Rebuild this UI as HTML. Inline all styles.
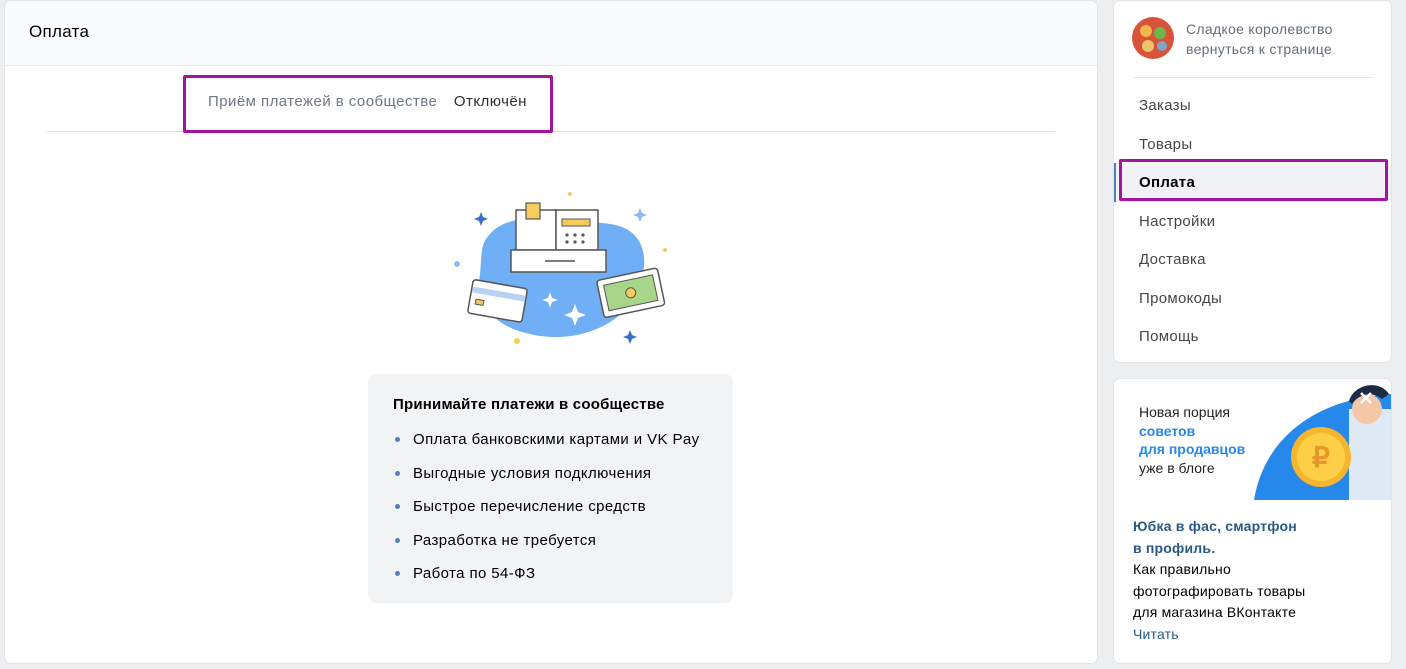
<!DOCTYPE html>
<html><head><meta charset="utf-8">
<style>
*{box-sizing:border-box;margin:0;padding:0}
body{width:1406px;height:669px;background:#edeef0;font-family:"Liberation Sans",Arial,sans-serif;position:relative;overflow:hidden;color:#000;letter-spacing:0.3px}
.card{position:absolute;background:#fff;border-radius:6px;box-shadow:0 0 0 1px #e3e4e8}
.main{left:5px;top:1px;width:1092px;height:662px}
.hdr{height:65px;background:#fafbfc;border-bottom:1px solid #e7e8ec;border-radius:6px 6px 0 0;padding:21px 0 0 24px;font-size:17px;color:#000}
.status{position:absolute;left:203px;top:92px;font-size:15px;color:#6d7885;letter-spacing:0.45px}
.status b{font-weight:normal;color:#2c2d2e;margin-left:12px}
.line{position:absolute;left:42px;top:130px;width:1008px;height:1px;background:#dce1e6}
.hl{position:absolute;border:3px solid #a4149f;border-radius:2px}
.info{position:absolute;left:363px;top:373px;width:365px;height:229px;background:#f2f3f5;border-radius:8px;padding:22px 0 0 25px}
.info h4{font-size:15px;font-weight:bold;color:#000;margin-bottom:18px;letter-spacing:0.2px}
.info li{list-style:none;font-size:15px;color:#000;height:33.5px;position:relative;padding-left:20px;letter-spacing:0.4px}
.info li:before{content:"";position:absolute;left:2px;top:6px;width:5px;height:5px;border-radius:50%;background:#5181b8}
.side{left:1114px;top:1px;width:277px;height:361px}
.grp{position:absolute;left:18px;top:16px;display:flex}
.grp .t{margin-left:12px;font-size:14px;color:#626d7a;line-height:20px;margin-top:2px}
.sep{position:absolute;left:19px;top:76px;width:240px;height:1px;background:#e7e8ec}
.menu{position:absolute;left:0;top:85px;width:277px}
.menu div{height:38.5px;padding:11px 0 0 25px;font-size:15px;color:#454647}
.menu .act{background:#f0f2f5;font-weight:bold;color:#000;border-left:2px solid #5181b8;padding-left:23px}
.promo{left:1114px;top:379px;width:277px;height:284px;overflow:hidden}
.pt{position:absolute;left:25px;top:24px;font-size:14px;line-height:18.5px;color:#222;letter-spacing:0}
.pt span{color:#2688eb;font-weight:bold}
.p2{position:absolute;left:19px;top:137px;font-size:14px;line-height:21.5px;color:#000;letter-spacing:0.2px}
.p2 b{color:#2a5885}
.p2 a{color:#2a5885}
</style></head><body>
<div class="card main">
<div class="hdr">Оплата</div>
<div class="status">Приём платежей в сообществе <b>Отключён</b></div>
<div class="line"></div>
<svg style="position:absolute;left:435px;top:178px" width="230" height="165" viewBox="430 170 230 165">
<path d="M480 225 C 500 200 560 210 600 215 C 640 220 640 260 625 285 C 610 320 560 335 520 325 C 485 318 465 295 470 265 C 472 245 470 235 480 225Z" fill="#70aef5"/>
<rect x="506" y="201" width="40" height="40" fill="#fff" stroke="#555" stroke-width="1.5"/>
<rect x="516" y="194" width="14" height="16" fill="#f3cc5c" stroke="#555" stroke-width="1.2"/>
<rect x="546" y="201" width="42" height="40" fill="#fff" stroke="#555" stroke-width="1.5"/>
<rect x="552" y="210" width="28" height="7" fill="#f3cc5c" stroke="#555"/>
<g fill="#555"><circle cx="557" cy="226" r="1.6"/><circle cx="565" cy="226" r="1.6"/><circle cx="573" cy="226" r="1.6"/><circle cx="557" cy="233" r="1.6"/><circle cx="565" cy="233" r="1.6"/><circle cx="573" cy="233" r="1.6"/></g>
<rect x="501" y="241" width="95" height="22" fill="#fff" stroke="#555" stroke-width="1.5"/>
<line x1="535" y1="252" x2="565" y2="252" stroke="#555" stroke-width="1.5"/>
<g transform="rotate(10 488 292)"><rect x="460" y="275" width="55" height="34" rx="3" fill="#fff" stroke="#555" stroke-width="1.5"/><rect x="461" y="282" width="53" height="6" fill="#b9d2f4"/><rect x="466" y="294" width="8" height="5" fill="#f3cc5c" stroke="#555"/></g>
<g transform="rotate(-12 620 285)"><rect x="590" y="265" width="62" height="38" rx="3" fill="#fff" stroke="#555" stroke-width="1.5"/><rect x="596" y="271" width="50" height="26" fill="#a7d68a" stroke="#555"/><circle cx="621" cy="284" r="5" fill="#f3cc5c" stroke="#555"/></g>
<path d="M540 283 l2 6 6 2 -6 2 -2 6 -2 -6 -6 -2 6 -2z" fill="#fff"/>
<path d="M565 295 l3 8 8 3 -8 3 -3 8 -3 -8 -8 -3 8 -3z" fill="#fff"/>
<path d="M471 203 l2 5 5 2 -5 2 -2 5 -2 -5 -5 -2 5 -2z" fill="#3a6fc1"/>
<path d="M630 199 l2 5 5 2 -5 2 -2 5 -2 -5 -5 -2 5 -2z" fill="#8fbaef"/>
<path d="M620 321 l2 5 5 2 -5 2 -2 5 -2 -5 -5 -2 5 -2z" fill="#3a6fc1"/>
<circle cx="560" cy="185" r="2" fill="#f3cc5c"/><circle cx="655" cy="241" r="2" fill="#f3cc5c"/><circle cx="507" cy="332" r="3" fill="#f3cc5c"/><circle cx="447" cy="255" r="3" fill="#8fbaef"/>
</svg>
<div class="info"><h4>Принимайте платежи в сообществе</h4><ul>
<li>Оплата банковскими картами и VK Pay</li><li>Выгодные условия подключения</li><li>Быстрое перечисление средств</li><li>Разработка не требуется</li><li>Работа по 54-ФЗ</li></ul></div>
</div>
<div class="hl" style="left:183px;top:75px;width:370px;height:58px"></div>
<div class="card side">
<div class="grp"><svg width="42" height="42"><circle cx="21" cy="21" r="21" fill="#d9523a"/><circle cx="14" cy="14" r="6" fill="#f0b64a"/><circle cx="28" cy="16" r="6" fill="#6cb84a"/><circle cx="16" cy="29" r="6" fill="#e9c46a"/><circle cx="30" cy="29" r="5" fill="#7aa6c8"/></svg>
<div class="t">Сладкое королевство<br>вернуться к странице</div></div>
<div class="sep"></div>
<div class="menu"><div>Заказы</div><div>Товары</div><div class="act">Оплата</div><div>Настройки</div><div>Доставка</div><div>Промокоды</div><div>Помощь</div></div>
</div>
<div class="hl" style="left:1119px;top:159px;width:269px;height:42px"></div>
<div class="card promo">
<svg style="position:absolute;left:140px;top:0" width="137" height="121"><path d="M0 121 C 10 60 60 20 137 15 L137 121Z" fill="#2688eb"/><rect x="95" y="30" width="42" height="91" fill="#dfe9f5"/><circle cx="113" cy="30" r="15" fill="#f5c7a6"/><path d="M95 22 C 100 5 125 0 135 15 L128 20 C 118 12 105 15 98 25Z" fill="#1d2a44"/><circle cx="67" cy="78" r="30" fill="#f5b52e"/><circle cx="67" cy="78" r="24" fill="#fbd046"/><text x="58" y="88" font-size="28" font-weight="bold" fill="#e7942a" font-family="Liberation Sans">₽</text><path d="M107 14 l10 10 M117 14 l-10 10" stroke="#fff" stroke-width="2.5"/></svg>
<div class="pt">Новая порция<br><span>советов<br>для продавцов</span><br>уже в блоге</div>
<div class="p2"><b>Юбка в фас, смартфон<br>в профиль.</b><br>Как правильно<br>фотографировать товары<br>для магазина ВКонтакте<br><a>Читать</a></div>
</div>
</body></html>
